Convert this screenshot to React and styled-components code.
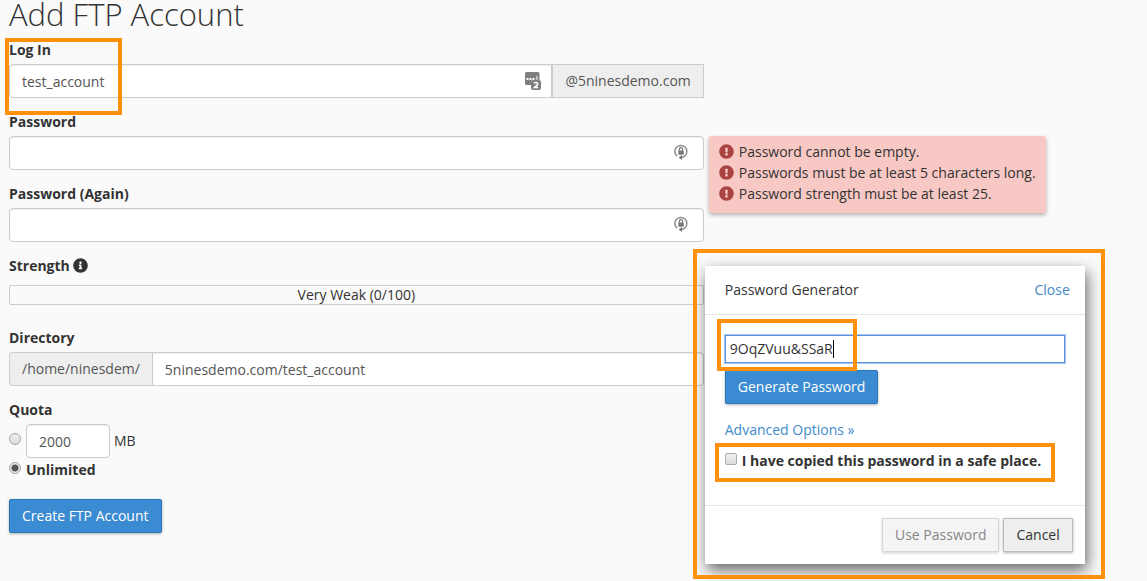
import React from 'react';
import styled, { createGlobalStyle } from 'styled-components';
import { FaExclamationCircle, FaInfoCircle } from 'react-icons/fa';

const errors = [
  'Password cannot be empty.',
  'Passwords must be at least 5 characters long.',
  'Password strength must be at least 25.'
];

const AccountsIcon = () => (
  <svg width="17" height="18" viewBox="0 0 17 18" aria-hidden="true">
    <path d="M1.5 0h11.500a1.500 1.500 0 0 1 1.500 1.500V8H7.500A1.500 1.500 0 0 0 6 9.500V13H1.500A1.500 1.500 0 0 1 0 11.500v-10A1.500 1.500 0 0 1 1.500 0z" fill="#7f7f7f" />
    <path d="M1.500 6h2v2h-2zM4.500 6h2v2h-2zM7.500 6h2v2h-2zM11.500 4h1v4h-1z" fill="#fff" />
    <rect x="6" y="8" width="10" height="10" rx="2" fill="#7f7f7f" />
    <path d="M9 11.200c1.200-1.200 3.700-.8 3.700.7 0 1.200-1.700 2-3.200 3.600h3.600" fill="none" stroke="#fff" strokeWidth="1.600" />
  </svg>
);

const LockIcon = () => (
  <svg width="14" height="16" viewBox="0 0 14 16" aria-hidden="true">
    <path d="M3.200 12.200A6 6 0 1 1 11 11.800Q9.800 13.200 7.500 13.500" fill="none" stroke="#888" strokeWidth="1.400" />
    <path d="M4.600 13.500L8 11v5z" fill="#777" />
    <rect x="4.300" y="6.500" width="5.400" height="4.200" fill="#777" />
    <path d="M5.400 6.800V5.200a1.600 1.600 0 0 1 3.200 0v1.600" fill="none" stroke="#777" strokeWidth="1.200" />
  </svg>
);

const App = () => {
  return (
    <Page>
      <GlobalStyle />
      <Column>
        <Title>Add FTP Account</Title>
        <form onSubmit={(e) => e.preventDefault()}>
          <Group>
            <Label htmlFor="login">Log In</Label>
            <InputGroup>
              <FieldWrap>
                <TextInput id="login" type="text" defaultValue="test_account" $join="left" />
                <FieldIcon $right={10}><AccountsIcon /></FieldIcon>
              </FieldWrap>
              <Addon $side="right">@5ninesdemo.com</Addon>
            </InputGroup>
            <Highlight $top={-2} $left={-4} $width="117px" $height="77px" />
          </Group>

          <Group>
            <Label htmlFor="password">Password</Label>
            <FieldWrap>
              <TextInput id="password" type="password" />
              <FieldIcon $right={16}><LockIcon /></FieldIcon>
              <ErrorList>
                {errors.map((error) => (
                  <li key={error}>
                    <FaExclamationCircle />
                    {error}
                  </li>
                ))}
              </ErrorList>
            </FieldWrap>
          </Group>

          <Group>
            <Label htmlFor="password2">Password (Again)</Label>
            <FieldWrap>
              <TextInput id="password2" type="password" />
              <FieldIcon $right={16}><LockIcon /></FieldIcon>
            </FieldWrap>
          </Group>

          <Group>
            <Label as="div">
              Strength <FaInfoCircle />
            </Label>
            <StrengthBar>Very Weak (0/100)</StrengthBar>
          </Group>

          <Group>
            <Label htmlFor="directory">Directory</Label>
            <InputGroup>
              <Addon $side="left">/home/ninesdem/</Addon>
              <FieldWrap>
                <TextInput id="directory" type="text" defaultValue="5ninesdemo.com/test_account" $join="right" />
              </FieldWrap>
            </InputGroup>
          </Group>

          <Quota>
            <Legend>Quota</Legend>
            <QuotaRow>
              <Radio type="radio" name="quota" aria-label="Limited" />
              <QuotaInput type="text" defaultValue="2000" aria-label="Quota in MB" />
              <span>MB</span>
            </QuotaRow>
            <QuotaLabel>
              <Radio type="radio" name="quota" defaultChecked />
              Unlimited
            </QuotaLabel>
          </Quota>

          <PrimaryButton type="submit">Create FTP Account</PrimaryButton>
        </form>

        <Dialog role="dialog" aria-labelledby="generator-title">
          <DialogHeader>
            <DialogTitle id="generator-title">Password Generator</DialogTitle>
            <Link href="#close">Close</Link>
          </DialogHeader>
          <DialogBody>
            <FieldWrap>
              <GeneratedInput type="text" defaultValue="9OqZVuu&amp;SSaR" aria-label="Generated password" />
              <Caret />
              <Highlight $top={-16} $left={-8} $width="140px" $height="52px" />
            </FieldWrap>
            <PrimaryButton type="button">Generate Password</PrimaryButton>
            <Advanced>
              <Link href="#advanced">Advanced Options »</Link>
            </Advanced>
            <CopiedLabel>
              <Checkbox type="checkbox" />
              I have copied this password in a safe place.
              <Highlight $top={-8} $left={-10} $width="340px" $height="39px" />
            </CopiedLabel>
          </DialogBody>
          <DialogFooter>
            <Button type="button" disabled>Use Password</Button>
            <Button type="button">Cancel</Button>
          </DialogFooter>
          <Highlight $top={-17} $left={-12} $width="412px" $height="330px" />
        </Dialog>
      </Column>
    </Page>
  );
};

// Styled Components
const GlobalStyle = createGlobalStyle`
  * {
    box-sizing: border-box;
  }

  body {
    margin: 0;
    background: #fafafa;
    color: #333;
    font-family: "Open Sans", sans-serif;
    font-size: 14px;
    line-height: 20px;
  }

  input, button {
    font: inherit;
    margin: 0;
  }
`;

const Page = styled.main`
  display: grid;
  grid-template-columns: minmax(0, 8fr) minmax(0, 5fr);
  min-height: 100vh;
  padding: 0 9px;
`;

const Column = styled.div`
  position: relative;
`;

const Title = styled.h1`
  margin: 0 0 12px;
  font-size: 31px;
  font-weight: 300;
  line-height: 28px;
`;

const Group = styled.div`
  position: relative;
  margin-bottom: 14px;
`;

const Label = styled.label`
  display: block;
  margin-bottom: 4px;
  font-weight: 700;

  svg {
    font-size: 15px;
    vertical-align: -2px;
  }
`;

const InputGroup = styled.div`
  display: flex;
`;

const FieldWrap = styled.div`
  position: relative;
  flex: 1;
`;

const TextInput = styled.input`
  display: block;
  width: 100%;
  height: 34px;
  padding: 6px 12px;
  border: 1px solid #ccc;
  border-radius: ${props => props.$join === 'left' ? '4px 0 0 4px' : props.$join === 'right' ? '0 4px 4px 0' : '4px'};
  background: #fff;
  box-shadow: inset 0 1px 1px rgba(0, 0, 0, 0.075);
  color: #555;
  outline: none;
`;

const FieldIcon = styled.span`
  position: absolute;
  top: 8px;
  right: ${props => props.$right}px;
  line-height: 0;
`;

const Addon = styled.span`
  height: 34px;
  padding: 6px 12px;
  border: 1px solid #ccc;
  border-${props => props.$side === 'left' ? 'right' : 'left'}-width: ${props => props.$side === 'left' ? '0' : '1px'};
  border-radius: ${props => props.$side === 'left' ? '4px 0 0 4px' : '0'};
  background: #eee;
  color: #555;
`;

const ErrorList = styled.ul`
  position: absolute;
  top: 0;
  left: 100%;
  margin: 0 0 0 5px;
  padding: 5px 10px 9px;
  list-style: none;
  white-space: nowrap;
  border-radius: 3px;
  background: #f8c8c4;
  box-shadow: 0 2px 4px rgba(0, 0, 0, 0.3);

  li {
    display: flex;
    align-items: center;
    gap: 5px;
    line-height: 21px;
  }

  svg {
    color: #a94442;
    font-size: 15px;
  }
`;

const StrengthBar = styled.div`
  height: 20px;
  margin-top: 9px;
  margin-bottom: 23px;
  border: 1px solid #ccc;
  border-radius: 2px;
  text-align: center;
  line-height: 18px;
`;

const Quota = styled.fieldset`
  margin: 0 0 19px;
  padding: 0;
  border: 0;
`;

const Legend = styled.legend`
  margin-bottom: 4px;
  padding: 0;
  font-weight: 700;
`;

const QuotaRow = styled.div`
  display: flex;
  align-items: center;
  gap: 4px;
  margin-bottom: 2px;
`;

const QuotaInput = styled(TextInput)`
  width: 84px;
`;

const QuotaLabel = styled.label`
  display: flex;
  align-items: center;
  gap: 4px;
  font-weight: 700;
`;

const Radio = styled.input`
  appearance: none;
  flex: none;
  width: 12px;
  height: 12px;

  && {
    margin: 0 1px 4px 0;
  }
  border: 1px solid #a6a6a6;
  border-radius: 50%;
  background: linear-gradient(#eee, #ddd);

  &:checked {
    background: radial-gradient(circle, #555 0, #555 3px, #e6e6e6 4px);
  }
`;

const Checkbox = styled.input`
  appearance: none;
  flex: none;
  width: 12px;
  height: 12px;

  && {
    margin: 0 0 4px;
  }
  border: 1px solid #aaa;
  border-radius: 2px;
  background: linear-gradient(#eee, #ddd);
`;

const Button = styled.button`
  height: 34px;
  padding: 6px 12px;
  border: 1px solid #bbb;
  border-radius: 1px;
  background: #eee;
  box-shadow: 0 1px 3px rgba(0, 0, 0, 0.3);
  color: #333;
  line-height: 20px;
  cursor: pointer;

  &:disabled {
    opacity: 0.6;
    cursor: not-allowed;
  }
`;

const PrimaryButton = styled(Button)`
  border-color: #2a75ba;
  border-radius: 2px;
  background: #3a8bd1;
  color: #fff;
`;

const Link = styled.a`
  color: #428bca;
  text-decoration: none;
`;

const Dialog = styled.section`
  position: absolute;
  top: 266px;
  left: 100%;
  width: 380px;
  margin-left: 1px;
  background: #fff;
  box-shadow: 2px 6px 14px rgba(0, 0, 0, 0.6);
`;

const DialogHeader = styled.header`
  display: flex;
  justify-content: space-between;
  padding: 14px 15px 14px 20px;
  border-bottom: 1px solid #e5e5e5;
`;

const DialogTitle = styled.h2`
  margin: 0;
  font-size: 14px;
  font-weight: 400;
`;

const DialogBody = styled.div`
  padding: 20px 20px 34px;
`;

const GeneratedInput = styled.input`
  display: block;
  width: 100%;
  height: 28px;
  margin-bottom: 7px;
  padding: 1px 4px 3px;
  border: 1px solid #5c8fdc;
  background: #fff;
  box-shadow: 0 0 0 1px #a9c5f2;
  color: #333;
  outline: none;
`;

const Caret = styled.span`
  position: absolute;
  top: 5px;
  left: 108px;
  width: 1px;
  height: 18px;
  background: #000;
`;

const Advanced = styled.div`
  margin: 16px 0 11px;
`;

const CopiedLabel = styled.label`
  position: relative;
  display: flex;
  align-items: center;
  gap: 5px;
  font-weight: 700;
  white-space: nowrap;
`;

const DialogFooter = styled.footer`
  display: flex;
  justify-content: flex-end;
  gap: 4px;
  padding: 12px;
  border-top: 1px solid #e5e5e5;
`;

const Highlight = styled.span`
  position: absolute;
  z-index: 1;
  top: ${props => props.$top}px;
  left: ${props => props.$left}px;
  width: ${props => props.$width};
  height: ${props => props.$height};
  border: 4px solid #ff910a;
  pointer-events: none;
`;

export default App;
